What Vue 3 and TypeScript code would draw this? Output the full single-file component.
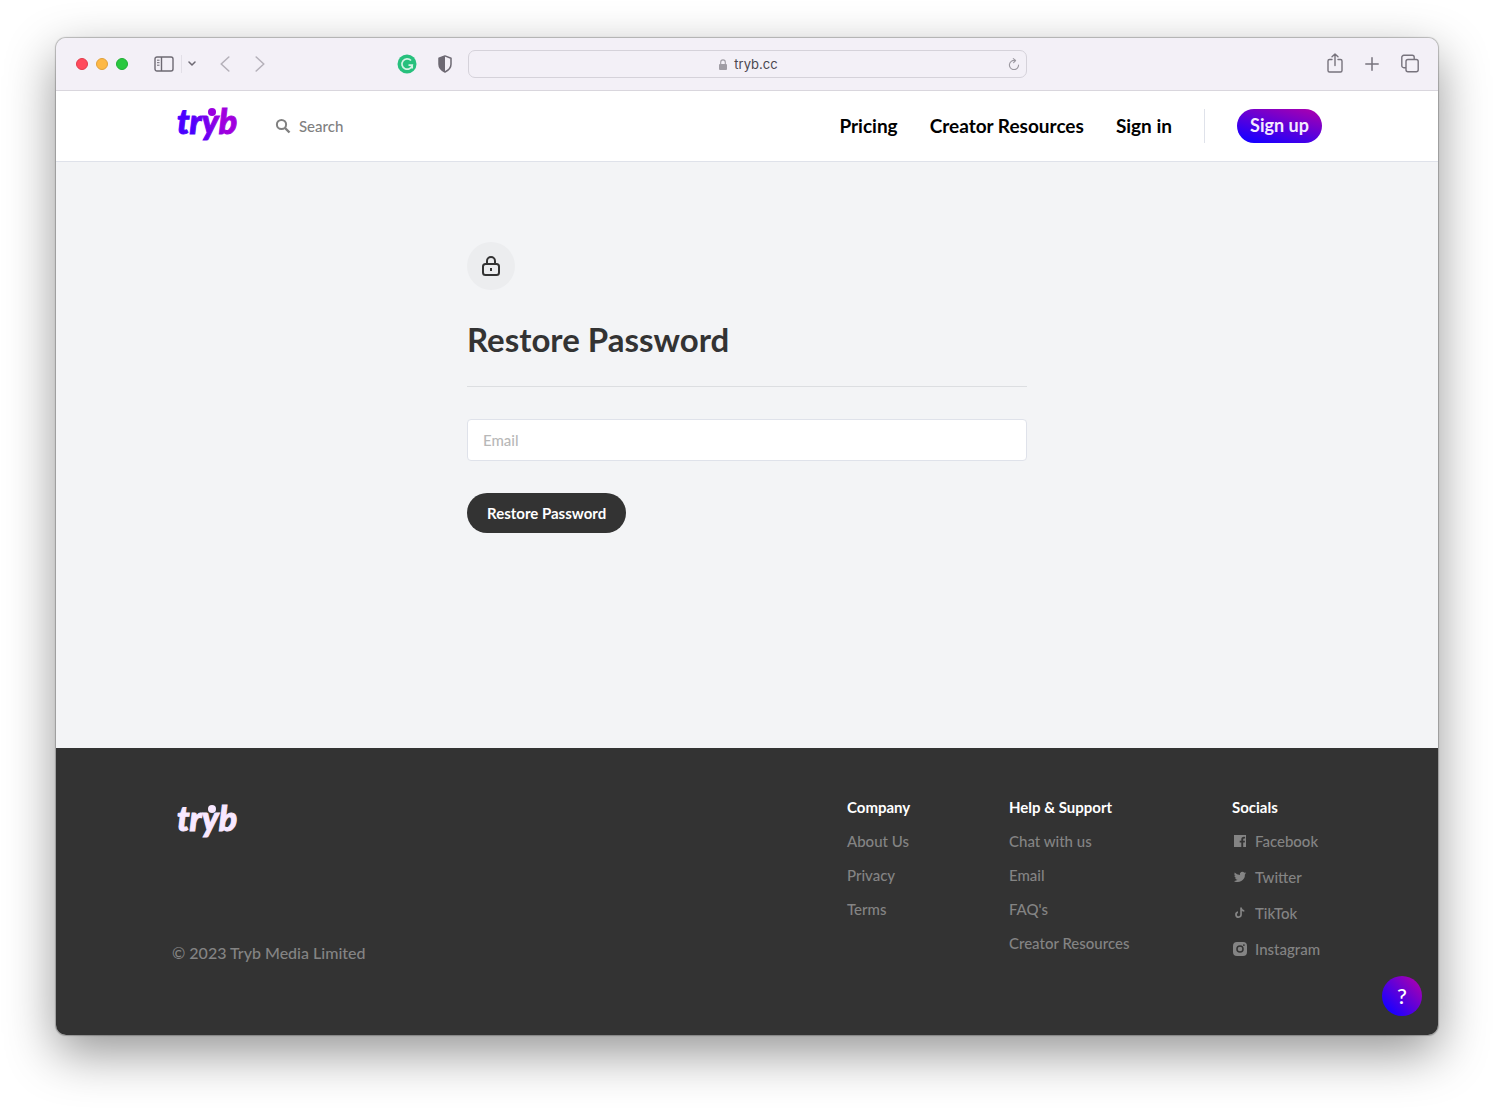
<script setup lang="ts">
interface SocialLink {
  label: string
  icon: string
}

const navLinks: string[] = ['Pricing', 'Creator Resources', 'Sign in']
const companyLinks: string[] = ['About Us', 'Privacy', 'Terms']
const helpLinks: string[] = ['Chat with us', 'Email', "FAQ's", 'Creator Resources']
const socialLinks: SocialLink[] = [
  {
    label: 'Facebook',
    icon: 'M2 2h12v12h-2.800V9.600h1.500l.3-1.900h-1.800V6.500c0-.6.3-.9.9-.9h1V3.900c-2.600-.5-3.800.6-3.800 2.300v1.500H7.700v1.900h1.600V14H2z',
  },
  {
    label: 'Twitter',
    icon: 'M14.200 4.100c-.5.2-.9.300-1.400.400.5-.3.900-.8 1.100-1.400-.5.300-1 .5-1.600.6a2.550 2.550 0 0 0-4.400 2.300A7.200 7.200 0 0 1 2.700 3.400a2.550 2.550 0 0 0 .8 3.400c-.4 0-.8-.1-1.200-.3 0 1.200.9 2.300 2.100 2.500-.4.1-.8.1-1.200 0 .3 1 1.300 1.800 2.400 1.800A5.100 5.100 0 0 1 1.800 11.900 7.250 7.250 0 0 0 12.900 5.400c.5-.3.900-.8 1.300-1.300z',
  },
  {
    label: 'TikTok',
    icon: 'M8.200 2.500h1.700c.1 1.500.9 2.300 2.400 2.500v1.700c-.9 0-1.700-.3-2.400-.8v3.700a3.400 3.400 0 1 1-3.900-3.400v1.800a1.650 1.650 0 1 0 2.200 1.600z',
  },
  {
    label: 'Instagram',
    icon: 'M5 1h6a4 4 0 0 1 4 4v6a4 4 0 0 1-4 4H5a4 4 0 0 1-4-4V5a4 4 0 0 1 4-4zm3 3.200a3.800 3.800 0 1 0 0 7.600 3.800 3.800 0 0 0 0-7.600zm0 1.500a2.300 2.300 0 1 1 0 4.600 2.300 2.300 0 0 1 0-4.600zm3.900-2.500a.9.9 0 1 0 0 1.800.9.9 0 0 0 0-1.800z',
  },
]
</script>

<template>
  <div class="window">
    <div class="toolbar">
      <div class="toolbar-side">
        <div class="lights">
          <button class="light red" aria-label="Close"></button>
          <button class="light amber" aria-label="Minimise"></button>
          <button class="light green" aria-label="Zoom"></button>
        </div>
        <button class="tool sidebar" aria-label="Sidebar">
          <svg width="20" height="16" viewBox="0 0 20 16" fill="none" stroke="#6d6973" stroke-width="1.400">
            <rect x="1" y="1" width="18" height="14" rx="2" />
            <path d="M7.500 1v14" />
            <path d="M3 4.200h2.500M3 6.700h2.500M3 9.200h2.500" stroke-width="1" />
          </svg>
        </button>
        <button class="tool menu" aria-label="Tab groups">
          <svg width="8" height="6" viewBox="0 0 8 6" fill="none" stroke="#6d6973" stroke-width="1.500" stroke-linecap="round" stroke-linejoin="round">
            <path d="M1 1l3 3 3-3" />
          </svg>
        </button>
        <button class="tool back" aria-label="Back">
          <svg width="10" height="16" viewBox="0 0 10 16" fill="none" stroke="#b5b1ba" stroke-width="1.600" stroke-linecap="round" stroke-linejoin="round">
            <path d="M8.800 1L1.200 8l7.600 7" />
          </svg>
        </button>
        <button class="tool forward" aria-label="Forward">
          <svg width="10" height="16" viewBox="0 0 10 16" fill="none" stroke="#b5b1ba" stroke-width="1.600" stroke-linecap="round" stroke-linejoin="round">
            <path d="M1.200 1l7.600 7-7.600 7" />
          </svg>
        </button>
        <div class="extensions">
          <button class="tool" aria-label="Writing assistant">
            <svg width="20" height="20" viewBox="0 0 20 20">
              <circle cx="10" cy="10" r="9.500" fill="#27c07d" />
              <path d="M14 6.500a5.200 5.200 0 1 0 1.200 4.700h-3.700M15.200 11v3.500" fill="none" stroke="#d4f3e4" stroke-width="1.700" />
            </svg>
          </button>
          <button class="tool" aria-label="Privacy report">
            <svg width="16" height="18" viewBox="0 0 16 18">
              <path d="M8 .9l6 2.300v6c0 3.600-2.500 6-6 7.800-3.500-1.800-6-4.200-6-7.800v-6z" fill="none" stroke="#6d6973" stroke-width="1.500" stroke-linejoin="round" />
              <path d="M8 1v16c-3.500-1.800-6-4.200-6-7.800v-6z" fill="#6d6973" />
            </svg>
          </button>
        </div>
      </div>

      <div class="address">
        <span class="site">
          <svg width="8" height="11" viewBox="0 0 8 11">
            <rect x="0" y="5" width="8" height="6" rx="1" fill="#a09da5" />
            <path d="M1.700 5.500V3.200a2.300 2.300 0 0 1 4.600 0v2.300" fill="none" stroke="#a09da5" stroke-width="1.100" />
          </svg>
          tryb.cc
        </span>
        <button class="tool reload" aria-label="Reload">
          <svg width="12" height="12" viewBox="0 0 12 12" fill="none" stroke="#9b98a0" stroke-width="1.100" stroke-linecap="round" stroke-linejoin="round">
            <path d="M6.800 2.500A4.600 4.600 0 1 0 10.600 7M5.300.6l2.300 1.900-2 2.100" />
          </svg>
        </button>
      </div>

      <div class="toolbar-side actions">
        <button class="tool" aria-label="Share">
          <svg width="16" height="22" viewBox="0 0 16 22" fill="none" stroke="#77737d" stroke-width="1.400" stroke-linecap="round" stroke-linejoin="round">
            <path d="M5 6.500H2.500a1.500 1.500 0 0 0-1.500 1.500v9.500A1.500 1.500 0 0 0 2.500 19h11a1.500 1.500 0 0 0 1.500-1.500V8a1.500 1.500 0 0 0-1.500-1.500H11M8 12.500V1M5 3.800L8 1l3 2.800" />
          </svg>
        </button>
        <button class="tool" aria-label="New tab">
          <svg width="14" height="14" viewBox="0 0 14 14" fill="none" stroke="#77737d" stroke-width="1.500" stroke-linecap="round">
            <path d="M7 .8v12.400M.8 7h12.400" />
          </svg>
        </button>
        <button class="tool" aria-label="Tab overview">
          <svg width="18" height="20" viewBox="0 0 18 20" fill="none" stroke="#77737d" stroke-width="1.400">
            <rect x="5" y="5.500" width="12.200" height="12.200" rx="2" />
            <path d="M5 13.700H2.800a2 2 0 0 1-2-2V3.300a2 2 0 0 1 2-2h8.400a2 2 0 0 1 2 2v2.200" />
          </svg>
        </button>
      </div>
    </div>

    <header class="site-header">
      <div class="container header-row">
        <a class="logo" href="#" aria-label="tryb home">
          <svg width="72" height="52" viewBox="0 0 72 52">
            <defs>
              <linearGradient id="brand" gradientUnits="userSpaceOnUse" x1="6" y1="36" x2="64" y2="16">
                <stop offset="0.250" stop-color="#4a00ff" />
                <stop offset="0.750" stop-color="#a000de" />
              </linearGradient>
            </defs>
            <text x="5" y="34" class="wordmark" fill="url(#brand)" stroke="url(#brand)">tryb</text>
            <circle cx="40" cy="12" r="4" fill="#9a00e0" />
          </svg>
        </a>
        <label class="search">
          <svg width="16" height="16" viewBox="0 0 16 16" fill="none" stroke="#808080" stroke-width="2">
            <circle cx="6.500" cy="6.500" r="4.600" />
            <path d="M10 10l4.500 4.500" stroke-width="2.400" />
          </svg>
          <input type="search" placeholder="Search" aria-label="Search" />
        </label>
        <nav class="nav">
          <a v-for="link in navLinks" :key="link" href="#">{{ link }}</a>
          <span class="divider"></span>
          <button class="signup">Sign up</button>
        </nav>
      </div>
    </header>

    <main class="main">
      <form class="card" @submit.prevent>
        <span class="badge">
          <svg width="20" height="22" viewBox="0 0 20 22" fill="none" stroke="#333" stroke-width="2">
            <rect x="2" y="9" width="16" height="11" rx="2.500" />
            <path d="M6 9V6a4 4 0 0 1 8 0v3M10 13v3" />
          </svg>
        </span>
        <h1>Restore Password</h1>
        <input class="email" type="email" placeholder="Email" aria-label="Email" />
        <button class="submit" type="submit">Restore Password</button>
      </form>
    </main>

    <footer class="footer">
      <div class="container footer-row">
        <div class="about">
          <a class="logo" href="#" aria-label="tryb home">
            <svg width="72" height="52" viewBox="0 0 72 52" fill="#f8e8ff">
              <text x="5" y="34" class="wordmark" stroke="#f8e8ff">tryb</text>
              <circle cx="40" cy="12" r="4" />
            </svg>
          </a>
          <p>© 2023 Tryb Media Limited</p>
        </div>
        <div class="columns">
          <section>
            <h2>Company</h2>
            <a v-for="link in companyLinks" :key="link" href="#">{{ link }}</a>
          </section>
          <section>
            <h2>Help &amp; Support</h2>
            <a v-for="link in helpLinks" :key="link" href="#">{{ link }}</a>
          </section>
          <section class="socials">
            <h2>Socials</h2>
            <a v-for="item in socialLinks" :key="item.label" href="#">
              <svg width="16" height="16" viewBox="0 0 16 16" fill="#848484" fill-rule="evenodd">
                <path :d="item.icon" />
              </svg>
              {{ item.label }}
            </a>
          </section>
        </div>
      </div>
      <button class="help" aria-label="Help">?</button>
    </footer>
  </div>
</template>

<style>
body {
  margin: 0;
  background: #fff;
}
</style>

<style scoped>
* {
  box-sizing: border-box;
}

.window {
  position: relative;
  margin: 38px 56px 74px;
  border-radius: 10px;
  background: #f3f4f6;
  font-family: Lato, "Liberation Sans", sans-serif;
  font-size: 15px;
  font-weight: 500;
  line-height: 20px;
  color: #333;
  box-shadow: 0 0 1px 1px rgba(0, 0, 0, 0.24), 0 18px 50px rgba(0, 0, 0, 0.42);
}

button,
input {
  font: inherit;
  margin: 0;
  padding: 0;
  border: 0;
  outline: 0;
  background: none;
}

button {
  cursor: pointer;
}

a {
  color: inherit;
  text-decoration: none;
  white-space: nowrap;
}

svg {
  display: block;
  flex: none;
}

/* Browser toolbar */
.toolbar {
  display: grid;
  grid-template-columns: 1fr 559px 1fr;
  align-items: center;
  height: 53px;
  padding: 0 19px 0 20px;
  border-bottom: 1px solid #d9d6dd;
  border-radius: 10px 10px 0 0;
  background: #f3f0f7;
}

.toolbar-side {
  display: flex;
  align-items: center;
}

.lights {
  display: flex;
  gap: 8px;
}

.light {
  width: 12px;
  height: 12px;
  border-radius: 50%;
}

.red {
  background: #ff4a5c;
  border: 1px solid #e23b4b;
}

.amber {
  background: #fdb845;
  border: 1px solid #e0a03a;
}

.green {
  background: #29c840;
  border: 1px solid #1fae35;
}

.tool {
  display: flex;
}

.sidebar {
  margin-left: 26px;
}

.menu {
  align-items: center;
  height: 18px;
  margin-left: 7px;
  padding-left: 6px;
  border-left: 1px solid #e2dfe7;
}

.back {
  margin-left: 24px;
}

.forward {
  margin-left: 25px;
}

.extensions {
  display: flex;
  align-items: center;
  gap: 20px;
  margin: 0 15px 0 auto;
}

.address {
  display: flex;
  align-items: center;
  height: 28px;
  padding: 0 6px 0 20px;
  border: 1px solid #d5d2da;
  border-radius: 7px;
}

.site {
  display: flex;
  flex: 1;
  align-items: center;
  justify-content: center;
  gap: 7px;
  font-family: Inter, "Liberation Sans", sans-serif;
  font-size: 13px;
  font-weight: 400;
  color: #4a474f;
}

.actions {
  justify-content: flex-end;
  gap: 22px;
}

/* Site header */
.site-header {
  border-bottom: 1px solid #dfe2ea;
  background: #fff;
}

.container {
  max-width: 1150px;
  margin: 0 auto;
}

.header-row {
  display: flex;
  align-items: center;
  height: 70px;
}

.logo {
  display: block;
}

.wordmark {
  font-family: Lato, "Liberation Sans", sans-serif;
  font-size: 34px;
  font-weight: 900;
  font-style: italic;
  stroke-width: 1px;
}

.search {
  display: flex;
  align-items: center;
  gap: 8px;
  margin-left: 31px;
}

.search input {
  width: 120px;
}

.search input::placeholder {
  color: #808080;
  opacity: 1;
}

.nav {
  display: flex;
  align-items: center;
  gap: 32px;
  margin-left: auto;
  font-size: 19px;
  font-weight: 700;
  color: #000;
}

.divider {
  width: 1px;
  height: 34px;
  background: #dfe2ea;
}

.signup {
  width: 85px;
  height: 34px;
  padding-bottom: 2px;
  border-radius: 17px;
  background: linear-gradient(15deg, #1a00ff 10%, #a800b0 95%);
  color: #f5e9ff;
  font-size: 18px;
}

/* Restore form */
.main {
  padding: 80px 16px 215px;
}

.card {
  display: flex;
  flex-direction: column;
  align-items: flex-start;
  max-width: 560px;
  margin: 0 auto;
}

.badge {
  display: flex;
  align-items: center;
  justify-content: center;
  width: 48px;
  height: 48px;
  border-radius: 50%;
  background: #ecedef;
}

h1 {
  align-self: stretch;
  margin: 29px 0 32px;
  padding-bottom: 27px;
  border-bottom: 1px solid #dcdee1;
  font-size: 33px;
  font-weight: 700;
  line-height: 40px;
}

.email {
  width: 100%;
  height: 42px;
  padding: 0 15px;
  border: 1px solid #dfe2ea;
  border-radius: 4px;
  background: #fff;
}

.email::placeholder {
  color: #b8b8b8;
  opacity: 1;
}

.submit {
  height: 40px;
  margin-top: 32px;
  padding: 0 20px;
  border-radius: 20px;
  background: #333;
  color: #fff;
  font-weight: 700;
}

/* Footer */
.footer {
  padding: 49px 16px 72px;
  border-radius: 0 0 10px 10px;
  background: #333;
  color: #848484;
}

.footer-row {
  display: flex;
  justify-content: space-between;
}

.about p {
  margin: 94px 0 0;
  font-size: 16px;
}

.columns {
  display: grid;
  grid-template-columns: 66px 127px 90px;
  gap: 96px;
}

section {
  display: flex;
  flex-direction: column;
  gap: 14px;
}

h2 {
  margin: 0;
  font-size: 15px;
  font-weight: 700;
  line-height: 20px;
  color: #fff;
  white-space: nowrap;
}

.socials {
  gap: 16px;
}

.socials h2 {
  margin-bottom: -2px;
}

.socials a {
  display: flex;
  align-items: center;
  gap: 7px;
}

.help {
  position: absolute;
  right: 16px;
  bottom: 19px;
  width: 40px;
  height: 40px;
  border-radius: 50%;
  background: linear-gradient(45deg, #1a00ff 15%, #a800b0 90%);
  color: #fff;
  font-size: 22px;
}
</style>
